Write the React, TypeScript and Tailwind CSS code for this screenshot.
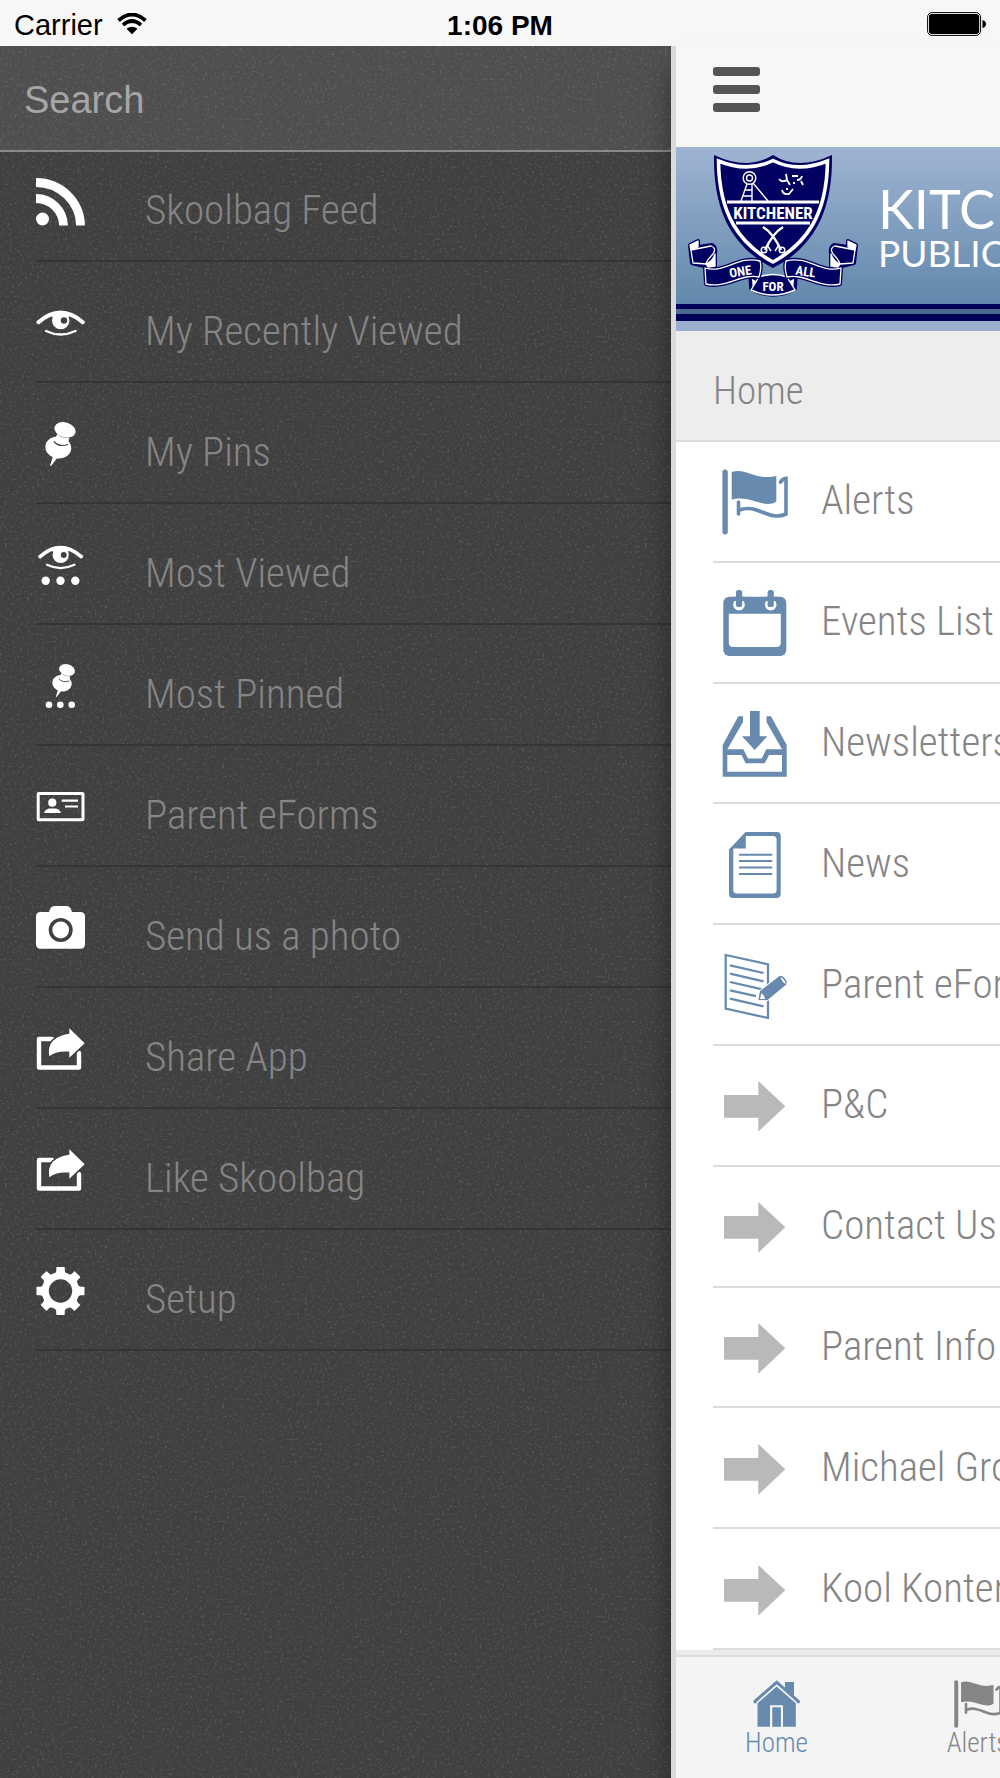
import { useState } from "react";
import type { ReactNode } from "react";

const Eye = () => (
  <>
    <path
      d="M2.5 23.2 Q24.5 4 46.8 23.2"
      fill="none"
      stroke="#fff"
      strokeWidth="4"
      strokeLinecap="round"
    />
    <path d="M14 15.5 Q24.5 9.5 35 15.5 L32.5 18 H16.5Z" fill="#fff" />
    <circle cx="24.7" cy="21.5" r="8.7" fill="#fff" />
    <circle cx="28" cy="21.5" r="3.2" fill="#404040" />
    <path
      d="M10 32 Q24.5 39 39.5 32"
      fill="none"
      stroke="#fff"
      strokeWidth="2.4"
      strokeLinecap="round"
    />
  </>
);

const Pin = () => (
  <>
    <ellipse cx="22.3" cy="27.5" rx="13" ry="11" fill="#fff" transform="rotate(10 22.3 27.5)" />
    <path d="M17 36 L14 46 L15 46 L22 37Z" fill="#fff" />
    <path d="M22 12 L34 16 L31.5 24 Q25 29 18 22Z" fill="#fff" />
    <path d="M18 21.5 Q23 27.5 32 24.5" fill="none" stroke="#404040" strokeWidth="1.2" />
    <path d="M20.5 13 Q26 18.5 34.5 17.5" fill="none" stroke="#404040" strokeWidth="1" />
    <ellipse cx="29" cy="9.8" rx="10.8" ry="7.5" fill="#fff" transform="rotate(17 29 9.8)" />
  </>
);

const Share = () => (
  <>
    <path
      d="M16 14 H3 V42.5 H43 V28"
      fill="none"
      stroke="#fff"
      strokeWidth="4.4"
      strokeLinecap="round"
      strokeLinejoin="round"
    />
    <path
      d="M33.3 3.3 L48.7 18.3 L33.3 32.8 V26.6 Q20 25.5 13.3 31.2 Q10 12 33.3 8.7Z"
      fill="#fff"
      stroke="#404040"
      strokeWidth="3"
      paintOrder="stroke"
    />
  </>
);

const Flag = () => (
  <>
    <rect x="0.4" y="0.5" width="5.4" height="65" rx="2.7" fill="currentColor" />
    <path d="M9.7 3 C24 -2 34 12 54.3 7 V32.5 C42 40.5 29 26 9.7 30.5Z" fill="currentColor" />
    <path
      d="M58.5 13.2 Q60.5 9.8 64 9.4 V45 C47 53 35 34 17.5 41 M16.5 33 V45"
      fill="none"
      stroke="currentColor"
      strokeWidth="3.6"
      strokeLinecap="round"
    />
  </>
);

const Arrow = () => (
  <path d="M2 22 H36.3 V8 L63.3 33.3 L36.3 58.7 V44.7 H2Z" fill="#b9b9b9" />
);

const drawerItems: { label: string; icon: ReactNode }[] = [
  {
    label: "Skoolbag Feed",
    icon: (
      <>
        <circle cx="6.5" cy="41" r="6.5" fill="#fff" />
        <path
          d="M0 4.5 A44.5 43.5 0 0 1 44.5 47.5 M0 20.5 A27.5 27.5 0 0 1 27.5 47.5"
          fill="none"
          stroke="#fff"
          strokeWidth="8.8"
        />
      </>
    ),
  },
  { label: "My Recently Viewed", icon: <Eye /> },
  { label: "My Pins", icon: <Pin /> },
  {
    label: "Most Viewed",
    icon: (
      <>
        <g transform="translate(1.7 -6) scale(.93)">
          <Eye />
        </g>
        <g fill="#fff">
          <circle cx="9.7" cy="39.7" r="4.2" />
          <circle cx="24.5" cy="39.7" r="4.2" />
          <circle cx="39.3" cy="39.7" r="4.2" />
        </g>
      </>
    ),
  },
  {
    label: "Most Pinned",
    icon: (
      <>
        <g transform="translate(9.3 .6) scale(.75)">
          <Pin />
        </g>
        <g fill="#fff">
          <circle cx="13" cy="42.7" r="3.3" />
          <circle cx="24.3" cy="42.7" r="3.3" />
          <circle cx="35.7" cy="42.7" r="3.3" />
        </g>
      </>
    ),
  },
  {
    label: "Parent eForms",
    icon: (
      <>
        <rect x="2.2" y="10.4" width="44.8" height="26.4" rx="0.5" fill="none" stroke="#fff" strokeWidth="3" />
        <circle cx="16.3" cy="19.7" r="4.1" fill="#fff" />
        <path d="M8 30 Q9 26 13.5 25.4 H19.5 Q24 26 24.8 30Z" fill="#fff" />
        <path d="M25.7 17.7 H42 M29 23.5 H42" stroke="#fff" strokeWidth="2.2" />
      </>
    ),
  },
  {
    label: "Send us a photo",
    icon: (
      <>
        <path
          d="M4.5 8 H13 Q14.5 2 18 2 H31 Q34.5 2 36 8 H44.5 Q49 8 49 12.5 V40 Q49 44.7 44.5 44.7 H4.5 Q0 44.7 0 40 V12.5 Q0 8 4.5 8Z"
          fill="#fff"
        />
        <circle cx="24.7" cy="26" r="10.2" fill="#fff" stroke="#404040" strokeWidth="3.6" />
      </>
    ),
  },
  { label: "Share App", icon: <Share /> },
  { label: "Like Skoolbag", icon: <Share /> },
  {
    label: "Setup",
    icon: (
      <>
        <circle cx="24.5" cy="24" r="15.2" fill="none" stroke="#fff" strokeWidth="7" />
        <g fill="#fff">
          {[0, 45, 90, 135, 180, 225, 270, 315].map((deg) => (
            <path
              key={deg}
              d="M18.5 8 L20.3 4 V0.8 Q20.3 0 21 0 H28 Q28.8 0 28.8 0.8 V4 L30.5 8Z"
              transform={`rotate(${deg} 24.5 24)`}
            />
          ))}
        </g>
      </>
    ),
  },
];

const homeItems: { label: string; icon: ReactNode }[] = [
  { label: "Alerts", icon: <Flag /> },
  {
    label: "Events List",
    icon: (
      <>
        <rect x="1.3" y="6.7" width="63" height="59.3" rx="6" fill="currentColor" />
        <path d="M6.8 23.7 H58.8 V52.5 Q58.8 57 54.3 57 H11.3 Q6.8 57 6.8 52.5Z" fill="#fff" />
        <circle cx="17" cy="14.7" r="5.8" fill="#fff" />
        <circle cx="48.7" cy="14.7" r="5.8" fill="#fff" />
        <path d="M11 6.7 H23 V11 H11Z M42.7 6.7 H54.7 V11 H42.7Z" fill="currentColor" />
        <rect x="14" y="0" width="6.2" height="17" rx="2.6" fill="currentColor" />
        <rect x="45.6" y="0" width="6.2" height="17" rx="2.6" fill="currentColor" />
      </>
    ),
  },
  {
    label: "Newsletters",
    icon: (
      <>
        <path d="M28 0 H37.7 V25.3 H45.3 L32.7 39 L20 25.3 H28Z" fill="currentColor" />
        <path
          d="M.7 34 L16.3 5.3 H21 V11 L5.3 38.3 H21.3 L26 47.5 H39.7 L44.3 38.3 H60 L44.5 11 V5.3 H49 L64.7 34 V65.7 H.7Z M5.3 44 V60.8 H60 V44 H47 L42.7 52.3 H23.7 L19.5 44Z"
          fill="currentColor"
          fillRule="evenodd"
        />
      </>
    ),
  },
  {
    label: "News",
    icon: (
      <>
        <path
          d="M7 17.5 L23.5 0 H54.7 Q58.7 0 58.7 4 V62 Q58.7 66 54.7 66 H11 Q7 66 7 62Z M11.3 16.5 V58 Q11.3 61.5 14.8 61.5 H51 Q54.6 61.5 54.6 58 V7.5 Q54.6 4 51 4 H23.8 V16.5Z"
          fill="currentColor"
          fillRule="evenodd"
        />
        <path d="M17 22.7 H50.2 M17 29 H50.2 M17 35.5 H50.2 M17 42 H50.2" stroke="currentColor" strokeWidth="2" />
      </>
    ),
  },
  {
    label: "Parent eForms",
    icon: (
      <>
        <path
          d="M3.7 2 L46 11.3 V65 L3.7 55.5Z M8 12.3 L41.5 20 M8 20.6 L41.5 28.3 M8 29 L41.5 36.6 M8 37.3 L34 43.2 M8 45.6 L41.5 53.3"
          fill="none"
          stroke="currentColor"
          strokeWidth="2.3"
        />
        <path
          d="M36.3 47 L38 38 L57.5 23 Q60 22 63 25.5 Q65.5 29 64.3 31.5 L45.3 47.3Z"
          fill="currentColor"
          stroke="#fff"
          strokeWidth="2"
          paintOrder="stroke"
        />
        <path d="M38 46 L39.2 40.5 Q42.5 41.5 43 46Z" fill="#fff" />
        <path d="M58.5 24 Q63 26.5 63.8 31.2 Q59.5 28.5 58.5 24Z" fill="#fff" />
      </>
    ),
  },
  { label: "P&C", icon: <Arrow /> },
  { label: "Contact Us", icon: <Arrow /> },
  { label: "Parent Info", icon: <Arrow /> },
  { label: "Michael Grove", icon: <Arrow /> },
  { label: "Kool Kontent", icon: <Arrow /> },
];

function StatusBar() {
  return (
    <header className="grid h-[46px] grid-cols-3 items-center bg-[#f7f7f7] px-[14px] pt-1 font-['Liberation_Sans',Arial,sans-serif] text-black">
      <div className="flex items-center gap-[14px] text-[29px]">
        Carrier
        <svg className="mb-1" width="30" height="22" viewBox="0 0 30 22" fill="none" stroke="#000">
          <path d="M1.5 7.5 Q15 -4.5 28.5 7.5" strokeWidth="3.8" />
          <path d="M6 12 Q15 4 24 12" strokeWidth="3.6" />
          <path d="M9.5 15.8 Q15 11.5 20.5 15.8 L15 21.2Z" fill="#000" stroke="none" />
        </svg>
      </div>
      <div className="text-center text-[28px] font-bold">1:06 PM</div>
      <svg className="mb-1 justify-self-end" width="59" height="24" viewBox="0 0 59 24">
        <rect x="0.6" y="0.6" width="53" height="22.8" rx="4.5" fill="none" stroke="#000" strokeWidth="1" />
        <rect x="2" y="2" width="50.2" height="20" rx="3" fill="#000" />
        <path d="M55.5 8 Q59 9 59 12 Q59 15 55.5 16Z" fill="#000" />
      </svg>
    </header>
  );
}

function Drawer() {
  return (
    <aside className="relative min-w-0 flex-1 bg-[#404040]">
      {/* speckled paper texture */}
      <svg className="pointer-events-none absolute inset-0 h-full w-full opacity-15">
        <filter id="grain">
          <feTurbulence type="fractalNoise" baseFrequency="0.4" numOctaves="2" />
          <feColorMatrix values="1 0 0 0 0  0 1 0 0 0  0 0 1 0 0  0 0 0 5 -2.8" />
        </filter>
        <rect width="100%" height="100%" filter="url(#grain)" />
      </svg>
      <div className="relative h-[106px] border-b-2 border-[#8a8a8a] bg-white/8">
        <input
          type="search"
          aria-label="Search"
          placeholder="Search"
          className="h-full w-full bg-transparent px-6 pt-1 font-['Liberation_Sans',Arial,sans-serif] text-[38px] text-white outline-none placeholder:text-[#a6a6a6]"
        />
      </div>
      <nav className="relative">
        <ul className="pl-9">
          {drawerItems.map((item) => (
            <li key={item.label} className="h-[121px] border-b-2 border-[#353535] first:h-[110px]">
              <a href="#" className="flex h-full items-end gap-[59px] pb-[34px]">
                <svg className="h-12 w-[50px] shrink-0" viewBox="0 0 50 48">
                  {item.icon}
                </svg>
                <span className="text-[41px] leading-8 whitespace-nowrap text-[#858585]">{item.label}</span>
              </a>
            </li>
          ))}
        </ul>
      </nav>
    </aside>
  );
}

function Ribbon() {
  return (
    <g fill="#020263" stroke="#020263" strokeWidth="4" strokeLinejoin="round">
      <path d="M10 98 L18 94 V100 L32 98 Q36 100 35 106 V119 L28 120 L12 116Z" />
      <path d="M25 121 C45 127 58 108 80 114 Q82 120 79 130 C62 126 45 142 26 137Z" />
      <g stroke="#fff" strokeWidth="1.3">
        <path d="M10 98 L18 94 V100 L11 103Z" fill="#fff" />
        <path d="M11 103 L31 99 Q37 101 33 107 Q27 113 26 117 L13 116Z" />
        <path d="M26 117 Q33 114 35 107 V119 L28 120Z" fill="#fff" />
        <path d="M25 121 C45 127 58 108 80 114 Q82 120 79 130 C62 126 45 142 26 137Z" />
      </g>
    </g>
  );
}

function Crest() {
  return (
    <svg className="shrink-0" width="186" height="156" viewBox="0 0 186 156" role="img" aria-label="School crest">
      <path
        d="M34 8 Q68 24 93 8 Q118 24 152 8 C153 70 130 102 93 121 C56 102 33 70 34 8Z"
        fill="#020263"
      />
      <path
        d="M38.5 14 Q68 26 93 13.5 Q118 26 147.5 14 C147 68 126 97 93 115 C60 97 39 68 38.5 14Z"
        fill="#020263"
        stroke="#fff"
        strokeWidth="3.6"
      />
      <path d="M47 55 H139 M56 76 H130" stroke="#fff" strokeWidth="3.2" />
      <text
        x="93"
        y="72"
        textAnchor="middle"
        fill="#fff"
        className="font-['Roboto_Condensed','Roboto',sans-serif] text-[17px] font-bold"
      >
        KITCHENER
      </text>
      {/* mine headframe */}
      <g fill="none" stroke="#fff" strokeWidth="1.4">
        <circle cx="69.5" cy="31" r="6.3" />
        <circle cx="69.5" cy="31" r="3" />
        <path d="M67 37 L61 54 M72 37 V54 M65 43 H72 M63 49 H72 M73 36 L88 54" />
      </g>
      {/* bull's head */}
      <g fill="none" stroke="#fff" strokeWidth="1.8">
        <path d="M99 32 Q102 36 107 33 M106 27 L107 33 L110 38 M122 29 Q121 33 117 33 M112 29 H118 M121 34 L123 38" />
        <path d="M102 43 Q103 48 109 47 L113 42 M106 42 H108 M113 36 H115" />
      </g>
      {/* crossed blades */}
      <g fill="none" stroke="#fff" strokeWidth="2.4">
        <path d="M83 80 Q93 86 101 103 M103 80 Q93 86 85 103" />
        <circle cx="84" cy="103" r="2.8" strokeWidth="1.5" />
        <circle cx="102" cy="103" r="2.8" strokeWidth="1.5" />
        <path d="M87 98 L91 104 M99 98 L95 104" strokeWidth="1.5" />
      </g>
      <path
        d="M70 129 L78 133 Q93 127 108 133 L116 129 L115 142 Q93 154 71 142Z"
        fill="#fff"
        stroke="#020263"
        strokeWidth="3.5"
        strokeLinejoin="round"
      />
      <path
        d="M79 130 Q93 125 107 130 L115 143 Q93 153 71 143Z"
        fill="#020263"
        stroke="#fff"
        strokeWidth="1.4"
        strokeLinejoin="round"
      />
      <Ribbon />
      <g transform="translate(186 0) scale(-1 1)">
        <Ribbon />
      </g>
      <g fill="#fff" className="font-['Roboto_Condensed','Roboto',sans-serif] text-[13px] font-bold">
        <text x="61" y="129" textAnchor="middle" transform="rotate(-9 61 129)">
          ONE
        </text>
        <text x="125" y="129" textAnchor="middle" transform="rotate(9 125 129)">
          ALL
        </text>
        <text x="93" y="144" textAnchor="middle">
          FOR
        </text>
      </g>
    </svg>
  );
}

function Banner() {
  return (
    <div className="flex h-[184px] flex-col bg-[#9aafcd]">
      <div className="flex h-[157px] items-start bg-linear-to-b from-[#a0b4d2] to-[#6188ac] pl-1 text-white">
        <Crest />
        <div className="pt-9 pl-3 font-['Lato',sans-serif] font-normal whitespace-nowrap">
          <div className="text-[54px] leading-[52px]">KITCHENER</div>
          <div className="text-[37px] leading-9">PUBLIC SCHOOL</div>
        </div>
      </div>
      <div className="h-[17px] border-t-[5px] border-b-[7px] border-[#000058] bg-[#4a6a92]" />
    </div>
  );
}

const tabs: { label: string; icon: ReactNode }[] = [
  {
    label: "Home",
    icon: (
      <svg className="size-12" viewBox="0 0 48 48">
        <path d="M32 2 H41 V18 L32 10Z" fill="currentColor" />
        <path d="M2.2 21.5 L23.7 2.6 L45.2 21.5" fill="none" stroke="currentColor" strokeWidth="3.6" strokeLinecap="round" />
        <path d="M4.5 23.2 L23.7 6.4 L42.8 23.2 V46.8 H30 V25.3 H17 V46.8 H4.5Z" fill="currentColor" />
        <path d="M4 22.4 L23.7 5.2 L43.3 22.4" fill="none" stroke="#f4f4f4" strokeWidth="1.3" />
        <rect x="19.3" y="27.3" width="8.6" height="19.5" fill="currentColor" />
      </svg>
    ),
  },
  {
    label: "Alerts",
    icon: (
      <svg className="size-12" viewBox="0 0 66 66">
        <Flag />
      </svg>
    ),
  },
];

export default function App() {
  const [tab, setTab] = useState("Home");
  return (
    <div className="flex min-h-screen flex-col overflow-hidden bg-[#404040] font-['Roboto_Condensed','Roboto',sans-serif] font-light">
      <StatusBar />
      <div className="flex flex-1">
        <Drawer />
        <main className="relative flex w-[329px] shrink-0 flex-col border-l-[5px] border-[#dadada] bg-white whitespace-nowrap text-[#858585] shadow-[0_24px_26px_rgba(0,0,0,0.4)]">
          <div className="flex flex-1 flex-col overflow-hidden">
            <div className="h-[101px] bg-[#f7f7f7] pt-[21px] pl-[37px]">
              <button aria-label="Toggle menu" className="flex w-[47px] flex-col gap-[9px]">
                <span className="h-[9px] w-full rounded-[3px] bg-[#555]" />
                <span className="h-[9px] w-full rounded-[3px] bg-[#555]" />
                <span className="h-[9px] w-full rounded-[3px] bg-[#555]" />
              </button>
            </div>
            <Banner />
            <h1 className="flex h-[111px] items-center border-b-2 border-[#dcdcdc] bg-[#ededed] pt-2.5 pl-[37px] text-[39px] leading-10">
              Home
            </h1>
            <ul className="flex flex-1 flex-col pl-[37px]">
              {homeItems.map((item) => (
                <li key={item.label} className="flex flex-1 border-b-2 border-[#dcdcdc]">
                  <a href="#" className="flex flex-1 items-center gap-[33px] pt-0.5 pl-[9px]">
                    <svg className="size-[66px] shrink-0 text-[#678aae]" viewBox="0 0 66 66">
                      {item.icon}
                    </svg>
                    <span className="pb-1 text-[41px] leading-10">{item.label}</span>
                  </a>
                </li>
              ))}
            </ul>
            <div className="h-[5px] bg-[#ebebeb]" />
            <nav className="flex h-[123px] border-t-2 border-[#dcdcdc] bg-[#f4f4f4]">
              {tabs.map((t) => (
                <button
                  key={t.label}
                  onClick={() => setTab(t.label)}
                  className={`flex w-[201px] shrink-0 flex-col items-center gap-px pt-[23px] text-[27px] leading-7 ${
                    tab === t.label ? "text-[#678aae]" : "text-[#858585]"
                  }`}
                >
                  {t.icon}
                  {t.label}
                </button>
              ))}
            </nav>
          </div>
        </main>
      </div>
    </div>
  );
}
